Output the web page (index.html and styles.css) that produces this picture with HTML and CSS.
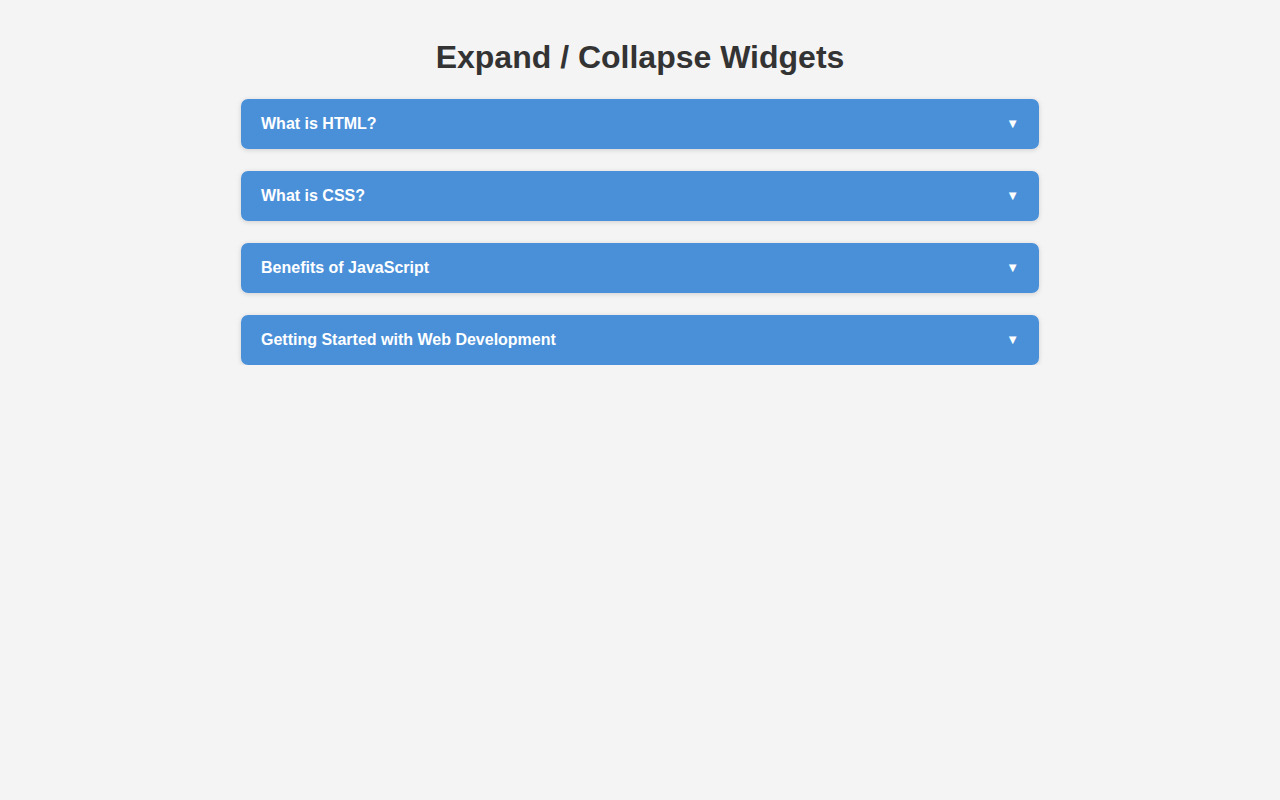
FILE: index.html
```html
<!DOCTYPE html>
<html lang="en">
<head>
<meta charset="utf-8">
<title>Expand / Collapse Widgets</title>
<link rel="stylesheet" href="styles.css">
</head>
<body>
<main class="container">
  <h1 class="title">Expand / Collapse Widgets</h1>
  <div class="accordion">
    <section class="item">
      <button class="header"><span>What is HTML?</span><span class="arrow">▼</span></button>
    </section>
    <section class="item">
      <button class="header"><span>What is CSS?</span><span class="arrow">▼</span></button>
    </section>
    <section class="item">
      <button class="header"><span>Benefits of JavaScript</span><span class="arrow">▼</span></button>
    </section>
    <section class="item">
      <button class="header"><span>Getting Started with Web Development</span><span class="arrow">▼</span></button>
    </section>
  </div>
</main>
</body>
</html>
```
FILE: styles.css
```css
html, body {
  margin: 0;
  padding: 0;
  background: #f4f4f4;
  font-family: "Liberation Sans", Arial, Helvetica, sans-serif;
  color: #333;
}

.container {
  width: 800px;
  margin: 0 auto;
  padding-top: 38px;
}

.title {
  margin: 0 0 23px;
  font-size: 32px;
  line-height: 38px;
  font-weight: bold;
  text-align: center;
  color: #333;
}

.accordion {
  display: flex;
  flex-direction: column;
  gap: 22px;
  padding: 0 1px;
}

.item {
  border-radius: 7px;
  box-shadow: 0 1px 5px rgba(0, 0, 0, 0.15);
  overflow: hidden;
}

.header {
  display: flex;
  align-items: center;
  justify-content: space-between;
  width: 100%;
  height: 50px;
  padding: 0 20px 0 20px;
  border: none;
  background: #4a90d9;
  color: #fff;
  font-family: inherit;
  font-size: 16px;
  font-weight: bold;
  text-align: left;
  cursor: pointer;
  box-sizing: border-box;
}

.arrow {
  font-size: 13px;
  padding-bottom: 2px;
}
```
